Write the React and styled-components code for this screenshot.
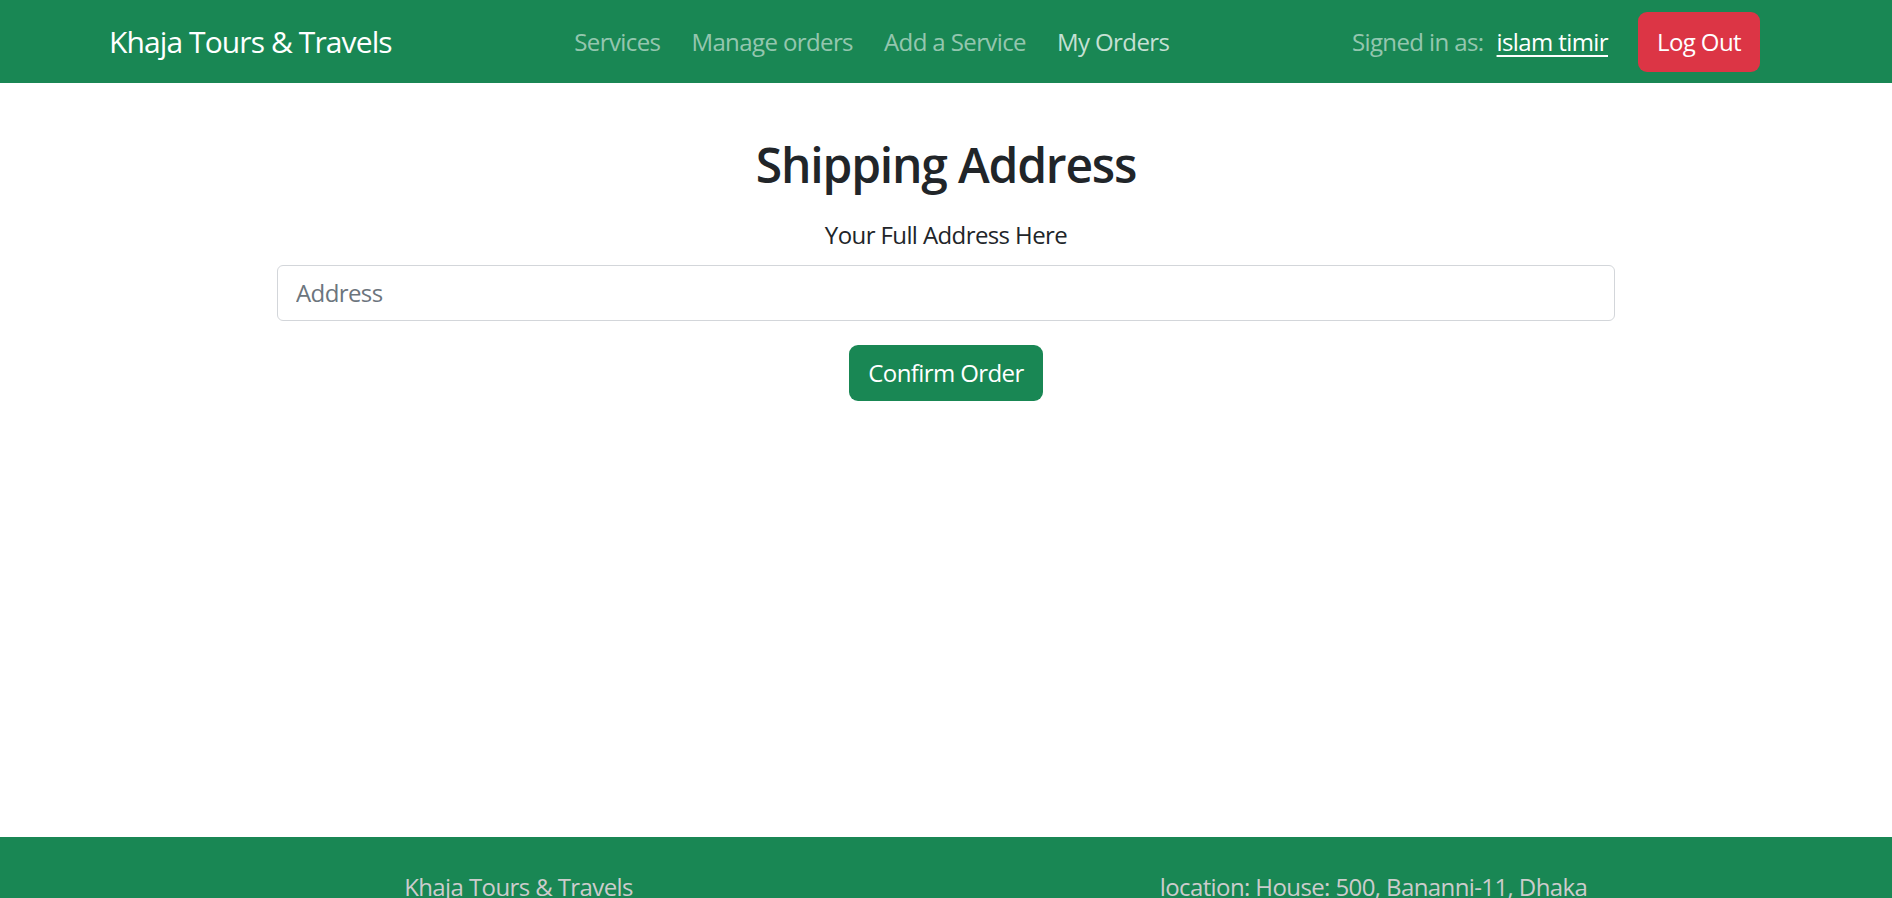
import React, { useState } from "react";
import styled, { createGlobalStyle } from "styled-components";

const GlobalStyle = createGlobalStyle`
  * {
    box-sizing: border-box;
  }
  body {
    margin: 0;
    font-family: "Open Sans", "Noto Sans", sans-serif;
    font-size: 24px;
    line-height: 1.5;
    letter-spacing: -0.6px;
    color: #212529;
    background: #fff;
  }
`;

const navLinks = ["Services", "Manage orders", "Add a Service", "My Orders"];

const App = () => {
  const [address, setAddress] = useState("");

  return (
    <>
      <GlobalStyle />
      <NavBar>
        <Container>
          <Brand href="#">Khaja Tours &amp; Travels</Brand>
          <Links>
            {navLinks.map((link) => (
              <NavLink key={link} href="#" active={link === "My Orders"}>
                {link}
              </NavLink>
            ))}
          </Links>
          <UserArea>
            <SignedIn>Signed in as:</SignedIn>
            <UserName href="#">islam timir</UserName>
            <Button variant="danger">Log Out</Button>
          </UserArea>
        </Container>
      </NavBar>

      <Main>
        <Title>Shipping Address</Title>
        <Label htmlFor="address">Your Full Address Here</Label>
        <Input
          id="address"
          placeholder="Address"
          value={address}
          onChange={(e) => setAddress(e.target.value)}
        />
        <Button variant="success">Confirm Order</Button>
      </Main>

      <Footer>
        <FooterRow>
          <FooterText>Khaja Tours &amp; Travels</FooterText>
          <FooterText>location: House: 500, Bananni-11, Dhaka</FooterText>
        </FooterRow>
      </Footer>
    </>
  );
};

const NavBar = styled.nav`
  background: #198754;
  padding: 11.5px 0;
`;

const Container = styled.div`
  max-width: 1710px;
  margin: 0 auto;
  padding: 0 18px;
  display: flex;
  align-items: center;
`;

const Brand = styled.a`
  font-size: 30px;
  line-height: 1.5;
  letter-spacing: -0.9px;
  color: #fff;
  text-decoration: none;
  white-space: nowrap;
`;

const Links = styled.div`
  display: flex;
  margin: 0 auto;
`;

const NavLink = styled.a`
  padding: 12px 15.5px;
  font-size: 24px;
  line-height: 1.5;
  color: ${({ active }) =>
    active ? "rgba(255, 255, 255, 0.75)" : "rgba(255, 255, 255, 0.55)"};
  text-decoration: none;
  white-space: nowrap;
`;

const UserArea = styled.div`
  display: flex;
  align-items: center;
  margin-right: 23px;
`;

const SignedIn = styled.span`
  color: rgba(255, 255, 255, 0.55);
  margin-right: 13px;
  white-space: nowrap;
`;

const UserName = styled.a`
  color: #fff;
  text-decoration: underline;
  text-underline-offset: 4px;
  margin-right: 30px;
  white-space: nowrap;
`;

const Button = styled.button`
  font-family: inherit;
  font-size: 24px;
  line-height: 1.5;
  letter-spacing: -0.6px;
  padding: ${({ variant }) => (variant === "danger" ? "11px 18px" : "9px 18px")};
  border: 1px solid transparent;
  border-radius: 9px;
  color: #fff;
  background: ${({ variant }) => (variant === "danger" ? "#dc3545" : "#198754")};
  cursor: pointer;
`;

const Main = styled.main`
  min-height: 754px;
  display: flex;
  flex-direction: column;
  align-items: center;
  padding-top: 53px;
`;

const Title = styled.h2`
  margin: 0 0 23.5px;
  font-size: 48px;
  font-weight: 600;
  line-height: 1.2;
  letter-spacing: -1.2px;
`;

const Label = styled.label`
  margin-bottom: 12px;
`;

const Input = styled.input`
  width: 1338px;
  font-family: inherit;
  font-size: 24px;
  line-height: 1.5;
  letter-spacing: -0.6px;
  padding: 9px 18px;
  border: 1px solid #d3d6da;
  border-radius: 6px;
  color: #212529;
  margin-bottom: 24px;
  &::placeholder {
    color: #6c757d;
  }
`;

const Footer = styled.footer`
  background: #198754;
  padding: 32px 0 40px;
`;

const FooterRow = styled.div`
  max-width: 1710px;
  margin: 0 auto;
  display: grid;
  grid-template-columns: 1fr 1fr;
`;

const FooterText = styled.p`
  margin: 0;
  text-align: center;
  color: #cccccc;
`;

export default App;
